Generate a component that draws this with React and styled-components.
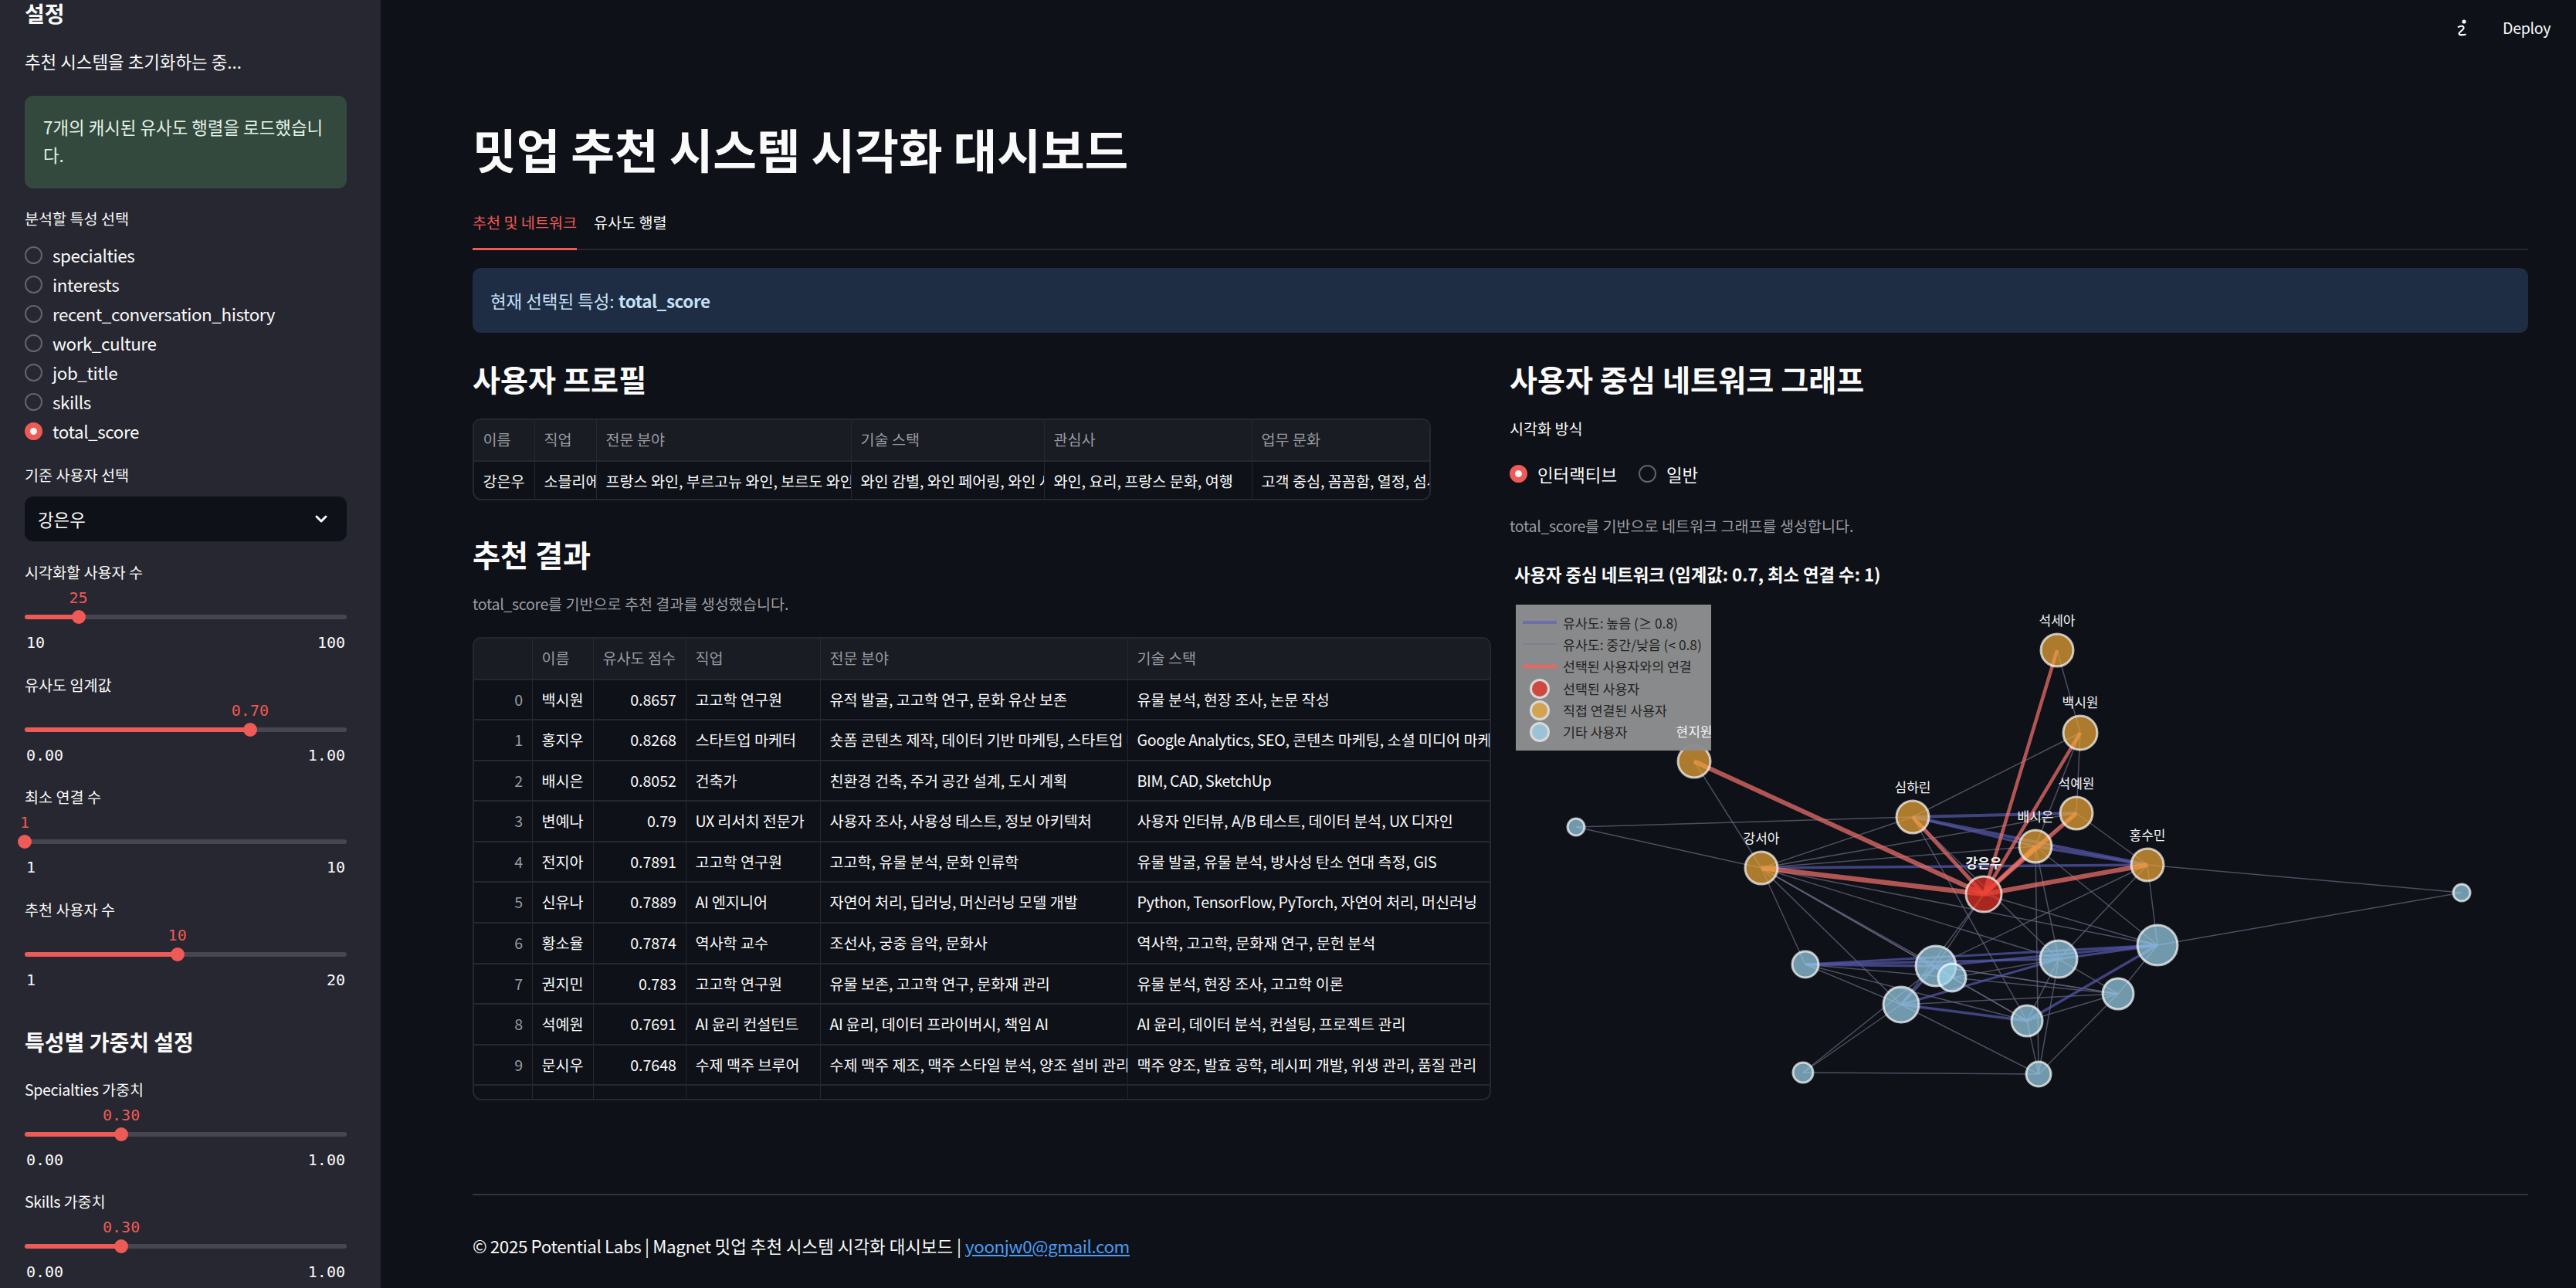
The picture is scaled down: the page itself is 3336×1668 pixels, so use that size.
import styled, {createGlobalStyle} from "styled-components"
import {ChevronDown} from "lucide-react"

const red = "#ee5a55"

const GlobalStyle = createGlobalStyle`
  html, body {
    margin: 0;
    padding: 0;
    height: 100%;
    overflow: hidden;
    background: #0e1117;
  }
  * {
    box-sizing: border-box;
  }
  body {
    font-family: "Noto Sans CJK KR", "Noto Sans", sans-serif;
    color: #fafafa;
    font-size: 22.4px;
  }
`

const features = ["specialties", "interests", "recent_conversation_history", "work_culture", "job_title", "skills", "total_score"]

const sliders = [
  {label: "시각화할 사용자 수", value: "25", min: "10", max: "100", pct: 16.67},
  {label: "유사도 임계값", value: "0.70", min: "0.00", max: "1.00", pct: 70},
  {label: "최소 연결 수", value: "1", min: "1", max: "10", pct: 0},
  {label: "추천 사용자 수", value: "10", min: "1", max: "20", pct: 47.4},
]

const weights = [
  {label: "Specialties 가중치", value: "0.30", min: "0.00", max: "1.00", pct: 30},
  {label: "Skills 가중치", value: "0.30", min: "0.00", max: "1.00", pct: 30},
]

const profileCols = "79px 80px 330px 250px 269px 1fr"
const profileHead = ["이름", "직업", "전문 분야", "기술 스택", "관심사", "업무 문화"]
const profileRow = ["강은우", "소믈리에", "프랑스 와인, 부르고뉴 와인, 보르도 와인", "와인 감별, 와인 페어링, 와인 서비스", "와인, 요리, 프랑스 문화, 여행", "고객 중심, 꼼꼼함, 열정, 섬세함"]

const resultCols = "76px 79px 120px 174px 398px 1fr"
const resultHead = ["", "이름", "유사도 점수", "직업", "전문 분야", "기술 스택"]
const results = [
  ["0", "백시원", "0.8657", "고고학 연구원", "유적 발굴, 고고학 연구, 문화 유산 보존", "유물 분석, 현장 조사, 논문 작성"],
  ["1", "홍지우", "0.8268", "스타트업 마케터", "숏폼 콘텐츠 제작, 데이터 기반 마케팅, 스타트업 마케팅", "Google Analytics, SEO, 콘텐츠 마케팅, 소셜 미디어 마케팅"],
  ["2", "배시은", "0.8052", "건축가", "친환경 건축, 주거 공간 설계, 도시 계획", "BIM, CAD, SketchUp"],
  ["3", "변예나", "0.79", "UX 리서치 전문가", "사용자 조사, 사용성 테스트, 정보 아키텍처", "사용자 인터뷰, A/B 테스트, 데이터 분석, UX 디자인"],
  ["4", "전지아", "0.7891", "고고학 연구원", "고고학, 유물 분석, 문화 인류학", "유물 발굴, 유물 분석, 방사성 탄소 연대 측정, GIS"],
  ["5", "신유나", "0.7889", "AI 엔지니어", "자연어 처리, 딥러닝, 머신러닝 모델 개발", "Python, TensorFlow, PyTorch, 자연어 처리, 머신러닝"],
  ["6", "황소율", "0.7874", "역사학 교수", "조선사, 궁중 음악, 문화사", "역사학, 고고학, 문화재 연구, 문헌 분석"],
  ["7", "권지민", "0.783", "고고학 연구원", "유물 보존, 고고학 연구, 문화재 관리", "유물 분석, 현장 조사, 고고학 이론"],
  ["8", "석예원", "0.7691", "AI 윤리 컨설턴트", "AI 윤리, 데이터 프라이버시, 책임 AI", "AI 윤리, 데이터 분석, 컨설팅, 프로젝트 관리"],
  ["9", "문시우", "0.7648", "수제 맥주 브루어", "수제 맥주 제조, 맥주 스타일 분석, 양조 설비 관리", "맥주 양조, 발효 공학, 레시피 개발, 위생 관리, 품질 관리"],
]

// graph coordinates are page pixels, the svg viewBox starts at 1955,720
const nodes = {
  a: {x: 2664, y: 842, r: 21, kind: "near", name: "석세아"},
  b: {x: 2694, y: 949, r: 22, kind: "near", name: "백시원"},
  c: {x: 2689, y: 1053, r: 21, kind: "near", name: "석예원"},
  d: {x: 2477, y: 1058, r: 21, kind: "near", name: "심하린"},
  e: {x: 2636, y: 1096, r: 21, kind: "near", name: "배시은"},
  f: {x: 2781, y: 1120, r: 21, kind: "near", name: "홍수민"},
  g: {x: 2281, y: 1124, r: 21, kind: "near", name: "강서아"},
  h: {x: 2569, y: 1158, r: 23, kind: "self", name: "강은우"},
  i: {x: 2194, y: 986, r: 21, kind: "near", name: "현지원"},
  j: {x: 2041, y: 1071, r: 11},
  k: {x: 3188, y: 1156, r: 11},
  l: {x: 2794, y: 1224, r: 26},
  m: {x: 2666, y: 1242, r: 24},
  n: {x: 2507, y: 1251, r: 26},
  o: {x: 2528, y: 1266, r: 18},
  p: {x: 2338, y: 1249, r: 17},
  q: {x: 2462, y: 1301, r: 23},
  r: {x: 2743, y: 1287, r: 20},
  s: {x: 2625, y: 1322, r: 20},
  t: {x: 2335, y: 1389, r: 13},
  u: {x: 2640, y: 1391, r: 16},
}

const thinEdges = ["ab", "bc", "bd", "be", "ce", "cf", "dg", "dj", "jg", "ig", "ge", "gc", "gm", "gn", "go", "gq", "gp", "gl", "gs", "fk", "kl", "fl", "fn", "fm", "em", "el", "eu", "ds", "dm", "hq", "hn", "hl", "he", "mu", "ms", "mr", "lr", "ru", "rs", "rq", "ro", "rn", "su", "so", "om", "op", "qp", "qt", "qu", "tu", "tn", "ps", "nr"]
const highEdges = [["dc", 4], ["df", 4], ["de", 3], ["ef", 4], ["gf", 3.5], ["pm", 3], ["pl", 3], ["pn", 3.5], ["nl", 3], ["ml", 3], ["qm", 3], ["qs", 3.5], ["sl", 3.5], ["qn", 3.5], ["no", 3]]
const selectedEdges = [["hi", 6], ["hg", 6.5], ["hf", 6], ["hd", 5], ["ha", 4.5], ["hb", 4.5], ["hc", 5.5], ["he", 5.5]]

const kindFill = {self: "#ea3224", near: "#f0a838"}

// the reference's Latin glyphs run a little narrower than the CJK font's
function Txt({children}) {
  return String(children).split(/([A-Za-z0-9_@./©|]+(?:[ ,]+[A-Za-z0-9_@./©|]+)*)/).map((part, i) => (
    /[A-Za-z]/.test(part) ? <Latin key={i}>{part}</Latin> : part
  ))
}

function Edge({id, color, width}) {
  const from = nodes[id[0]]
  const to = nodes[id[1]]
  return <line x1={from.x} y1={from.y} x2={to.x} y2={to.y} stroke={color} strokeWidth={width}/>
}

function NetworkGraph() {
  return (
    <GraphSvg viewBox="1955 720 1319 720">
      <ChartTitle x="1961" y="753">사용자 중심 네트워크 (임계값: 0.7, 최소 연결 수: 1)</ChartTitle>

      <g strokeOpacity="0.72">
        {thinEdges.map((id) => <Edge key={id} id={id} color="#65667f" width={1.5}/>)}
        {highEdges.map(([id, w]) => <Edge key={id} id={id} color="#5458a8" width={w}/>)}
        {selectedEdges.map(([id, w]) => <Edge key={id} id={id} color="#f0706c" width={w}/>)}
      </g>

      {Object.keys(nodes).map((key) => {
        const n = nodes[key]
        return (
          <circle key={key} cx={n.x} cy={n.y} r={n.r} fill={kindFill[n.kind] || "#9bd3eb"} fillOpacity="0.7" stroke="#ffffff" strokeOpacity="0.7" strokeWidth="3"/>
        )
      })}

      <rect x="1963" y="783" width="253" height="189" fill="#8c8d8e" fillOpacity="0.98"/>
      <line x1="1972" y1="806" x2="2016" y2="806" stroke="#6b6ea8" strokeWidth="4"/>
      <line x1="1972" y1="834" x2="2016" y2="834" stroke="#7a7b94" strokeWidth="1.5"/>
      <line x1="1972" y1="863" x2="2016" y2="863" stroke="#dd6b68" strokeWidth="5"/>
      <circle cx="1994" cy="892" r="11.5" fill="#d0493f" stroke="#d8d8d8" strokeWidth="3"/>
      <circle cx="1994" cy="920" r="11.5" fill="#d2a350" stroke="#d8d8d8" strokeWidth="3"/>
      <circle cx="1994" cy="948" r="11.5" fill="#9bc2d6" stroke="#d8d8d8" strokeWidth="3"/>
      <LegendText x="2024" y="814">유사도: 높음 (≥ 0.8)</LegendText>
      <LegendText x="2024" y="842">유사도: 중간/낮음 (&lt; 0.8)</LegendText>
      <LegendText x="2024" y="870">선택된 사용자와의 연결</LegendText>
      <LegendText x="2024" y="899">선택된 사용자</LegendText>
      <LegendText x="2024" y="927">직접 연결된 사용자</LegendText>
      <LegendText x="2024" y="955">기타 사용자</LegendText>

      {Object.keys(nodes).filter((key) => nodes[key].name).map((key) => {
        const n = nodes[key]
        return <NodeName key={key} x={n.x} y={n.y - n.r - 11} $self={n.kind === "self"}>{n.name}</NodeName>
      })}
    </GraphSvg>
  )
}

function SliderField({label, value, min, max, pct}) {
  return (
    <SliderBlock>
      <FieldLabel><Txt>{label}</Txt></FieldLabel>
      <Rail>
        <RailFill style={{width: `${pct}%`}}/>
        <Thumb style={{left: `${pct}%`}}/>
        <ThumbValue style={{left: `${pct}%`}}>{value}</ThumbValue>
      </Rail>
      <Ticks><span>{min}</span><span>{max}</span></Ticks>
    </SliderBlock>
  )
}

function DataRow({cols, cells, head, alignIndex}) {
  return (
    <Row $cols={cols} $head={head}>
      {cells.map((c, i) => (
        <Cell key={i} $head={head} $right={!head && alignIndex && i === 2} $index={!head && alignIndex && i === 0}><Txt>{c}</Txt></Cell>
      ))}
    </Row>
  )
}

export default function App() {
  return (
    <Page>
      <GlobalStyle/>
      <Sidebar>
        <SideHeading>설정</SideHeading>
        <SideStatus>추천 시스템을 초기화하는 중...</SideStatus>
        <SuccessBox>7개의 캐시된 유사도 행렬을 로드했습니다.</SuccessBox>
        <FieldLabel>분석할 특성 선택</FieldLabel>
        <RadioList>
          {features.map((f) => (
            <RadioRow key={f}>
              <RadioDot $on={f === "total_score"}/>
              <Latin>{f}</Latin>
            </RadioRow>
          ))}
        </RadioList>
        <SelectLabel>기준 사용자 선택</SelectLabel>
        <SelectBox>
          강은우
          <ChevronDown size={24} strokeWidth={3} color="#fafafa"/>
        </SelectBox>
        <SliderStack>
          {sliders.map((s) => <SliderField key={s.label} {...s}/>)}
        </SliderStack>
        <WeightHeading>특성별 가중치 설정</WeightHeading>
        <WeightStack>
          {weights.map((s) => <SliderField key={s.label} {...s}/>)}
        </WeightStack>
      </Sidebar>

      <Main>
        <TopBar>
          <svg width="13" height="24" viewBox="0 0 13 24" fill="none">
            <circle cx="9" cy="4" r="2.6" fill="#fafafa"/>
            <path d="M1 11.5 C4 9 9 9 8.5 12.5 C8 15 3 17 2.5 19.5 C2.2 21.5 8 21.5 11.5 20.5" stroke="#fafafa" strokeWidth="2.2"/>
          </svg>
          <DeployLabel><Latin>Deploy</Latin></DeployLabel>
        </TopBar>

        <Title>밋업 추천 시스템 시각화 대시보드</Title>
        <TabBar>
          <Tab $active>추천 및 네트워크</Tab>
          <Tab>유사도 행렬</Tab>
        </TabBar>
        <InfoBox>현재 선택된 특성: <strong><Latin>total_score</Latin></strong></InfoBox>

        <Columns>
          <Column>
            <SectionTitle>사용자 프로필</SectionTitle>
            <ProfileTable>
              <DataRow cols={profileCols} cells={profileHead} head/>
              <DataRow cols={profileCols} cells={profileRow}/>
            </ProfileTable>
            <ResultsTitle>추천 결과</ResultsTitle>
            <ResultsCaption><Txt>total_score를 기반으로 추천 결과를 생성했습니다.</Txt></ResultsCaption>
            <ResultTable>
              <DataRow cols={resultCols} cells={resultHead} head/>
              {results.map((r) => <DataRow key={r[0]} cols={resultCols} cells={r} alignIndex/>)}
              <DataRow cols={resultCols} cells={["", "", "", "", "", ""]}/>
            </ResultTable>
          </Column>

          <Column>
            <SectionTitle>사용자 중심 네트워크 그래프</SectionTitle>
            <ViewLabel>시각화 방식</ViewLabel>
            <ViewRadios>
              <RadioInline><RadioDot $on/>인터랙티브</RadioInline>
              <RadioInline><RadioDot/>일반</RadioInline>
            </ViewRadios>
            <GraphCaption><Txt>total_score를 기반으로 네트워크 그래프를 생성합니다.</Txt></GraphCaption>
            <NetworkGraph/>
          </Column>
        </Columns>

        <Divider/>
        <Footer><Latin>© 2025 Potential Labs | Magnet</Latin> 밋업 추천 시스템 시각화 대시보드 | <FooterLink href="#"><Latin>yoonjw0@gmail.com</Latin></FooterLink></Footer>
      </Main>
    </Page>
  )
}

const Latin = styled.span`
  letter-spacing: -0.018em;
`
const Page = styled.div`
  display: grid;
  grid-template-columns: 493px 1fr;
  width: 3336px;
  height: 1668px;
  overflow: hidden;
`
const Sidebar = styled.aside`
  background: #262730;
  height: 1668px;
  overflow: hidden;
  padding: 0 44px 0 32px;
  display: flex;
  flex-direction: column;
`
const SideHeading = styled.h2`
  margin: -3px 0 0;
  font-size: 28px;
  font-weight: 600;
  line-height: 40px;
`
const SideStatus = styled.p`
  margin: 25px 0 0;
  line-height: 34px;
`
const SuccessBox = styled.div`
  margin-top: 28px;
  height: 120px;
  padding: 22px 24px;
  background: #34493d;
  border-radius: 11px;
  color: #e2f3e6;
  line-height: 36px;
`
const FieldLabel = styled.div`
  font-size: 19.6px;
  line-height: 28px;
  height: 28px;
  margin-top: 25px;
  flex-shrink: 0;
`
const RadioList = styled.div`
  margin-top: 14px;
  display: flex;
  flex-direction: column;
`
const RadioRow = styled.div`
  display: flex;
  align-items: center;
  gap: 13px;
  height: 38px;
  line-height: 38px;
`
const RadioDot = styled.span`
  width: 23px;
  height: 23px;
  border-radius: 50%;
  flex-shrink: 0;
  border: ${(props) => (props.$on ? `7.5px solid ${red}` : "2px solid #62636b")};
  background: ${(props) => (props.$on ? "#f5f5f5" : "transparent")};
`
const SelectLabel = styled(FieldLabel)`
  margin-top: 24px;
`
const SelectBox = styled.div`
  margin-top: 14px;
  height: 58px;
  flex-shrink: 0;
  background: #0e1117;
  border-radius: 11px;
  padding: 0 21px 0 17px;
  display: flex;
  align-items: center;
  justify-content: space-between;
`
const SliderStack = styled.div`
  margin-top: 26px;
  display: flex;
  flex-direction: column;
  gap: 26.5px;
`
const WeightStack = styled(SliderStack)`
  margin-top: 28px;
`
const SliderBlock = styled.div`
  height: 119px;
  flex-shrink: 0;
  ${FieldLabel} {
    margin-top: 0;
  }
`
const Rail = styled.div`
  position: relative;
  margin-top: 41px;
  height: 6px;
  border-radius: 3px;
  background: #45464f;
`
const RailFill = styled.div`
  height: 6px;
  border-radius: 3px;
  background: ${red};
`
const Thumb = styled.div`
  position: absolute;
  top: -6px;
  width: 18px;
  height: 18px;
  margin-left: -9px;
  border-radius: 50%;
  background: ${red};
`
const ThumbValue = styled.div`
  position: absolute;
  bottom: 16px;
  transform: translateX(-50%);
  font-family: "DejaVu Sans Mono", "Liberation Mono", monospace;
  font-size: 20px;
  line-height: 24px;
  color: ${red};
`
const Ticks = styled.div`
  margin-top: 16px;
  display: flex;
  justify-content: space-between;
  padding: 0 2px;
  font-family: "DejaVu Sans Mono", "Liberation Mono", monospace;
  font-size: 20px;
  line-height: 28px;
`
const WeightHeading = styled.h2`
  margin: 46px 0 0;
  font-size: 28px;
  font-weight: 600;
  line-height: 40px;
  flex-shrink: 0;
`
const Main = styled.main`
  position: relative;
  padding: 151px 62px 0 119px;
  height: 1668px;
  overflow: hidden;
`
const TopBar = styled.div`
  position: absolute;
  top: 22px;
  right: 33px;
  display: flex;
  align-items: center;
  gap: 46px;
`
const DeployLabel = styled.span`
  font-size: 19.6px;
  line-height: 28px;
`
const Title = styled.h1`
  margin: 0;
  font-size: 61.6px;
  font-weight: 700;
  line-height: 84px;
`
const TabBar = styled.div`
  margin-top: 20px;
  display: flex;
  gap: 22px;
  border-bottom: 2.5px solid #262730;
`
const Tab = styled.div`
  height: 69px;
  line-height: 66px;
  font-size: 19.6px;
  margin-bottom: -2.5px;
  color: ${(props) => (props.$active ? red : "#fafafa")};
  border-bottom: 3px solid ${(props) => (props.$active ? red : "transparent")};
`
const InfoBox = styled.div`
  margin-top: 23px;
  height: 84px;
  padding: 0 23px;
  display: flex;
  align-items: center;
  gap: 0.25em;
  background: #1e2d44;
  border-radius: 11px;
  color: #c7e0f7;
  strong {
    font-weight: 600;
  }
`
const Columns = styled.div`
  margin-top: 31px;
  display: grid;
  grid-template-columns: 1319px 1319px;
  gap: 24px;
`
const Column = styled.section`
  display: flex;
  flex-direction: column;
`
const SectionTitle = styled.h3`
  margin: 0;
  font-size: 39.2px;
  font-weight: 600;
  line-height: 56px;
`
const TableFrame = styled.div`
  border: 2px solid #262730;
  border-radius: 11px;
  overflow: hidden;
  background: #0e1117;
`
const ProfileTable = styled(TableFrame)`
  margin-top: 24px;
  width: 1241px;
  height: 106px;
`
const ResultTable = styled(TableFrame)`
  margin-top: 29px;
  width: 1319px;
  height: 600px;
`
const Row = styled.div`
  display: grid;
  grid-template-columns: ${(props) => props.$cols};
  height: ${(props) => (props.$head ? "54px" : "52.6px")};
  background: ${(props) => (props.$head ? "#1a1c24" : "transparent")};
  border-bottom: 2px solid #262730;
`
const Cell = styled.div`
  padding: 0 12px 0 11.5px;
  overflow: hidden;
  white-space: nowrap;
  font-size: 19.6px;
  line-height: 50px;
  text-align: ${(props) => (props.$right || props.$index ? "right" : "left")};
  color: ${(props) => (props.$head || props.$index ? "#989aa1" : "#fafafa")};
  border-right: 1.5px solid #262730;
  &:last-child {
    border-right: none;
  }
`
const ResultsTitle = styled(SectionTitle)`
  margin-top: 41px;
`
const Caption = styled.p`
  margin: 0;
  font-size: 19.6px;
  line-height: 28px;
  color: #9b9ca3;
`
const ResultsCaption = styled(Caption)`
  margin-top: 23px;
`
const ViewLabel = styled.div`
  margin-top: 23px;
  font-size: 19.6px;
  line-height: 28px;
`
const ViewRadios = styled.div`
  margin-top: 30px;
  display: flex;
  gap: 28px;
`
const RadioInline = styled.div`
  display: flex;
  align-items: center;
  gap: 13px;
  height: 30px;
`
const GraphCaption = styled(Caption)`
  margin-top: 38px;
`
const GraphSvg = styled.svg`
  display: block;
  margin-top: 25px;
  width: 1319px;
  height: 720px;
`
const ChartTitle = styled.text`
  font-size: 22.3px;
  font-weight: 700;
  fill: #fafafa;
`
const LegendText = styled.text`
  font-size: 17.3px;
  fill: #222222;
`
const NodeName = styled.text`
  font-size: 17px;
  font-weight: ${(props) => (props.$self ? 700 : 400)};
  fill: #f4f4f4;
  text-anchor: middle;
`
const Divider = styled.hr`
  margin: 106px 0 0;
  border: none;
  border-top: 2px solid #33343c;
`
const Footer = styled.footer`
  margin-top: 47px;
  line-height: 36px;
`
const FooterLink = styled.a`
  color: #4c9cf5;
`
